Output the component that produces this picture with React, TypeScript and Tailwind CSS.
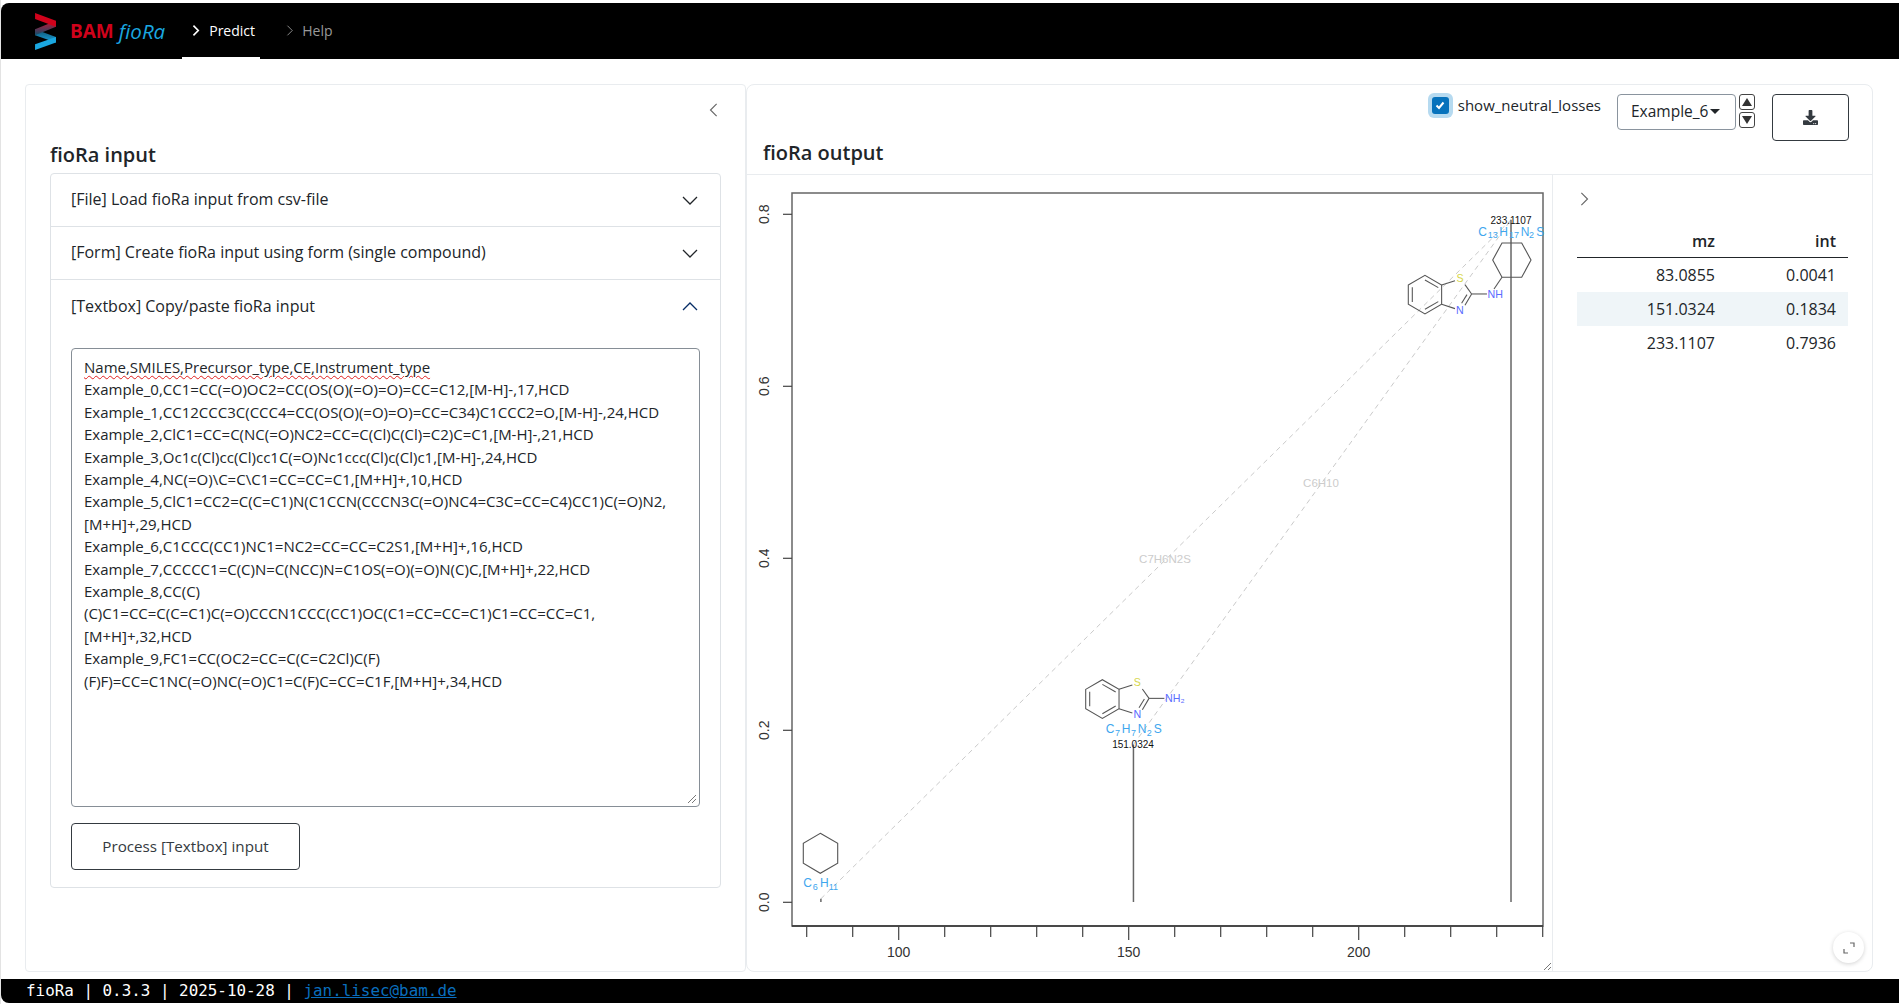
import { FaDownload } from 'react-icons/fa';

const TEXT_LINES = [
  'Example_0,CC1=CC(=O)OC2=CC(OS(O)(=O)=O)=CC=C12,[M-H]-,17,HCD',
  'Example_1,CC12CCC3C(CCC4=CC(OS(O)(=O)=O)=CC=C34)C1CCC2=O,[M-H]-,24,HCD',
  'Example_2,ClC1=CC=C(NC(=O)NC2=CC=C(Cl)C(Cl)=C2)C=C1,[M-H]-,21,HCD',
  'Example_3,Oc1c(Cl)cc(Cl)cc1C(=O)Nc1ccc(Cl)c(Cl)c1,[M-H]-,24,HCD',
  'Example_4,NC(=O)\\C=C\\C1=CC=CC=C1,[M+H]+,10,HCD',
  'Example_5,ClC1=CC2=C(C=C1)N(C1CCN(CCCN3C(=O)NC4=C3C=CC=C4)CC1)C(=O)N2,[M+H]+,29,HCD',
  'Example_6,C1CCC(CC1)NC1=NC2=CC=CC=C2S1,[M+H]+,16,HCD',
  'Example_7,CCCCC1=C(C)N=C(NCC)N=C1OS(=O)(=O)N(C)C,[M+H]+,22,HCD',
  'Example_8,CC(C)(C)C1=CC=C(C=C1)C(=O)CCCN1CCC(CC1)OC(C1=CC=CC=C1)C1=CC=CC=C1,[M+H]+,32,HCD',
  'Example_9,FC1=CC(OC2=CC=C(C=C2Cl)C(F)(F)F)=CC=C1NC(=O)NC(=O)C1=C(F)C=CC=C1F,[M+H]+,34,HCD',
];

const PEAKS = [
  { mz: '83.0855', int: '0.0041' },
  { mz: '151.0324', int: '0.1834' },
  { mz: '233.1107', int: '0.7936' },
];

const X_TICKS = [80, 90, 100, 110, 120, 130, 140, 150, 160, 170, 180, 190, 200, 210, 220, 230, 240];
const Y_TICKS = [0, 0.2, 0.4, 0.6, 0.8];

const xPos = (mz: number) => 806.7 + (mz - 80) * 4.6;
const yPos = (v: number) => 902.3 - v * 860;

function Chevron({ dir, className, weight = 1.3 }: { dir: 'up' | 'down' | 'left' | 'right'; className?: string; weight?: number }) {
  const pts = {
    up: '1,11 8,4 15,11',
    down: '1,5 8,12 15,5',
    left: '11,1 4,8 11,15',
    right: '5,1 12,8 5,15',
  }[dir];
  return (
    <svg viewBox="0 0 16 16" className={className} fill="none" stroke="currentColor" strokeWidth={weight}>
      <polyline points={pts} />
    </svg>
  );
}

function Logo() {
  return (
    <svg viewBox="45 37 62 110" className="w-[21px] h-[37px] shrink-0">
      <defs>
        <linearGradient id="mid1" x1="0" y1="0" x2="0" y2="1">
          <stop offset="0" stopColor="#c8102e" />
          <stop offset="1" stopColor="#0f4f6c" />
        </linearGradient>
        <linearGradient id="mid2" x1="0" y1="0" x2="0" y2="1">
          <stop offset="0" stopColor="#0f4f6c" />
          <stop offset="1" stopColor="#1aa3dc" />
        </linearGradient>
      </defs>
      <path d="M45 85 L107 108 L107 125 L45 103 Z" fill="url(#mid2)" />
      <path d="M107 60 L107 78 L45 103 L45 85 Z" fill="url(#mid1)" />
      <path d="M45 37 L107 60 L107 78 L45 55 Z" fill="#d0021b" />
      <path d="M107 108 L107 125 L45 147 L45 130 Z" fill="#1aa7e0" />
    </svg>
  );
}

function AccordionHead({ title, open }: { title: string; open?: boolean }) {
  return (
    <div className={`h-[53px] flex items-center justify-between pl-5 pr-[22px] ${open ? '' : 'border-b border-[#dee2e6]'}`}>
      <span className="text-[16px] text-[#212529] pb-0.5">{title}</span>
      <Chevron dir={open ? 'up' : 'down'} className={`w-4 h-4 ${open ? 'text-[#052c65]' : 'text-[#212529]'}`} />
    </div>
  );
}

function Formula({ parts, baseline }: { parts: [string, number, boolean][]; baseline: number }) {
  return (
    <g fill="#3ea6ee" fontFamily='"Liberation Sans", sans-serif'>
      {parts.map(([t, x, sub]) => (
        <text key={t + x} x={x} y={sub ? baseline + 2.7 : baseline} fontSize={sub ? 9 : 12}>
          {t}
        </text>
      ))}
    </g>
  );
}

function Thiazole({ amine }: { amine: string }) {
  // coordinates are 3x of the local crop, scaled down by the parent group
  return (
    <g fill="none" stroke="#555" strokeWidth="3.2">
      <polygon points="0,29 50,0 100,29 100,87 50,116 0,87" />
      <line x1="12" y1="36" x2="12" y2="80" />
      <line x1="50" y1="14" x2="90" y2="37" />
      <line x1="50" y1="102" x2="90" y2="79" />
      <line x1="100" y1="29" x2="140" y2="16" />
      <line x1="170" y1="28" x2="190" y2="56" />
      <line x1="190" y1="56" x2="170" y2="90" />
      <line x1="176" y1="58" x2="160" y2="84" />
      <line x1="100" y1="87" x2="140" y2="100" />
      <line x1="190" y1="56" x2="236" y2="56" />
      <g stroke="none" fontFamily='"Liberation Sans", sans-serif' fontSize="32">
        <text x="155" y="20" fill="#d6d64a" textAnchor="middle">S</text>
        <text x="155" y="115" fill="#5a6cff" textAnchor="middle">N</text>
        <text x="238" y="68" fill="#5a6cff">{amine}</text>
      </g>
    </g>
  );
}

function SpectrumPlot() {
  return (
    <svg viewBox="747 175 805 797" className="w-[805px] h-[797px] block">
      {/* neutral loss connectors */}
      <g stroke="#cacaca" strokeWidth="1" strokeDasharray="5 4">
        <line x1={xPos(83.0855)} y1={yPos(0.0041)} x2={xPos(233.1107)} y2={yPos(0.7936)} />
        <line x1={xPos(151.0324)} y1={yPos(0.1834)} x2={xPos(233.1107)} y2={yPos(0.7936)} />
      </g>
      <g fill="#cccccc" fontSize="11.5" textAnchor="middle" fontFamily='"Liberation Sans", sans-serif'>
        <text x="1165" y="563">C7H6N2S</text>
        <text x="1321" y="487">C6H10</text>
      </g>

      {/* frame and axes */}
      <rect x="792" y="193" width="751" height="733" fill="none" stroke="#666" strokeWidth="1.5" />
      <line x1="792" y1="926" x2="1543" y2="926" stroke="#333" strokeWidth="1.5" />
      {X_TICKS.map((t) => (
        <line key={t} x1={xPos(t)} y1="926" x2={xPos(t)} y2={t % 50 === 0 ? 940 : 937} stroke="#444" strokeWidth="1.2" />
      ))}
      {[100, 150, 200].map((t) => (
        <text key={t} x={xPos(t)} y="957" textAnchor="middle" fontSize="14" fill="#333" fontFamily='"Liberation Sans", sans-serif'>
          {t}
        </text>
      ))}
      {Y_TICKS.map((t) => (
        <g key={t}>
          <line x1="783" y1={yPos(t)} x2="792" y2={yPos(t)} stroke="#444" strokeWidth="1.2" />
          <text
            transform={`translate(769 ${yPos(t)}) rotate(-90)`}
            textAnchor="middle"
            fontSize="14"
            fill="#333"
            fontFamily='"Liberation Sans", sans-serif'
          >
            {t.toFixed(1)}
          </text>
        </g>
      ))}

      {/* peaks */}
      <g stroke="#666" strokeWidth="1.5">
        <line x1={xPos(83.0855)} y1="902" x2={xPos(83.0855)} y2={yPos(0.0041)} />
        <line x1={xPos(151.0324)} y1="902" x2={xPos(151.0324)} y2={yPos(0.1834)} />
        <line x1={xPos(233.1107)} y1="902" x2={xPos(233.1107)} y2={yPos(0.7936)} />
      </g>

      {/* 233 annotation */}
      <text x="1511" y="224" textAnchor="middle" fontSize="10" fill="#111" fontFamily='"Liberation Sans", sans-serif'>233.1107</text>
      <Formula
        baseline={235.7}
        parts={[['C', 1478.3, false], ['13', 1487.7, true], ['H', 1499.3, false], ['17', 1509, true], ['N', 1520.7, false], ['2', 1529, true], ['S', 1536.3, false]]}
      />
      <polygon points="1502,277.3 1521.7,277.3 1531,260 1521.7,243 1502,243 1492.7,260" fill="none" stroke="#555" strokeWidth="1.1" />
      <line x1="1502" y1="277.3" x2="1494" y2="289" stroke="#555" strokeWidth="1.1" />
      <g transform="translate(1408.3 275.3) scale(0.3333)">
        <Thiazole amine="NH" />
      </g>

      {/* 151 annotation */}
      <g transform="translate(1085.7 679.7) scale(0.3333)">
        <Thiazole amine="NH₂" />
      </g>
      <Formula
        baseline={733.3}
        parts={[['C', 1105.7, false], ['7', 1115, true], ['H', 1121.7, false], ['7', 1131, true], ['N', 1137.7, false], ['2', 1146.7, true], ['S', 1153.7, false]]}
      />
      <text x="1133" y="748" textAnchor="middle" fontSize="10" fill="#111" fontFamily='"Liberation Sans", sans-serif'>151.0324</text>

      {/* 83 annotation */}
      <polygon points="820.3,833.3 837.7,843.3 837.7,863.3 820.3,873.3 803.3,863.3 803.3,843.3" fill="none" stroke="#555" strokeWidth="1.1" />
      <Formula baseline={887.3} parts={[['C', 803.3, false], ['6', 812.7, true], ['H', 820, false], ['11', 828.7, true]]} />

      {/* resize grip */}
      <g stroke="#555" strokeWidth="0.8">
        <line x1="1544" y1="970" x2="1551" y2="963" />
        <line x1="1548" y1="970" x2="1551" y2="967" />
      </g>
    </svg>
  );
}

export default function App() {
  return (
    <div className="h-[1004px] flex flex-col bg-white pt-[3px] pb-px border-l border-[#e3e3e3] overflow-hidden font-['Open_Sans',sans-serif] text-[#212529]">
      {/* top bar */}
      <header className="h-14 shrink-0 bg-black rounded-tl-lg flex items-stretch pl-[34px]">
        <div className="flex items-center">
          <Logo />
          <span className="ml-[14px] text-[19px] font-bold text-[#d0021b]">BAM</span>
          <span className="ml-[5px] text-[20.5px] italic text-[#1aa7e0]">fioRa</span>
        </div>
        <nav className="flex ml-[17px] text-[14px]">
          <div className="w-[78px] flex items-center pl-[8px] gap-[8px] border-b-2 border-white text-white font-medium">
            <Chevron dir="right" className="w-[11px] h-[11px]" weight={2.4} />
            Predict
          </div>
          <div className="ml-6 flex items-center gap-[7px] text-[#999] pb-0.5">
            <Chevron dir="right" className="w-[11px] h-[11px]" />
            Help
          </div>
        </nav>
      </header>

      <main className="flex-1 min-h-0 flex pt-[25px] pb-[7px] pl-6 pr-[26px]">
        {/* input panel */}
        <section className="w-[721px] shrink-0 border border-[#e9ecef] rounded flex flex-col px-6">
          <div className="h-[50px] flex items-center justify-end">
            <Chevron dir="left" className="w-[14px] h-[14px] text-[#666]" />
          </div>
          <h2 className="h-[38px] flex items-center pt-0.5 text-[20px] font-semibold">fioRa input</h2>
          <div className="border border-[#dee2e6] rounded h-[715px] flex flex-col">
            <AccordionHead title="[File] Load fioRa input from csv-file" />
            <AccordionHead title="[Form] Create fioRa input using form (single compound)" />
            <AccordionHead title="[Textbox] Copy/paste fioRa input" open />
            <div className="px-5 pt-[15px]">
              <div className="relative h-[459px] border border-[#868e96] rounded pl-[12px] pr-[12px] pt-[7px] text-[15px] leading-[22.4px] text-[#212529] break-words">
                <div className="underline decoration-wavy decoration-[#e02020] decoration-1 underline-offset-2">
                  Name,SMILES,Precursor_type,CE,Instrument_type
                </div>
                {TEXT_LINES.map((line) => (
                  <div key={line}>{line}</div>
                ))}
                <svg viewBox="0 0 10 10" className="absolute right-0.5 bottom-0.5 w-2.5 h-2.5" stroke="#555" strokeWidth="0.8">
                  <line x1="1" y1="9" x2="9" y2="1" />
                  <line x1="5" y1="9" x2="9" y2="5" />
                </svg>
              </div>
              <button className="mt-4 w-[229px] h-[47px] border border-[#343a40] rounded text-[15.2px] text-[#343a40]">
                Process [Textbox] input
              </button>
            </div>
          </div>
        </section>

        {/* output panel */}
        <section className="flex-1 min-w-0 border border-[#e9ecef] rounded-lg flex flex-col">
          <div className="h-[90px] shrink-0 border-b border-[#e9ecef] flex flex-col">
            <div className="flex justify-end pt-[9px] pr-[23px] h-[56px]">
              <div className="flex items-center h-[22px]">
                <span className="w-[25px] h-[25px] rounded-md bg-[#b6daf0] flex items-center justify-center">
                  <span className="w-[17px] h-[17px] rounded-[3px] bg-[#0672bc] flex items-center justify-center">
                    <svg viewBox="0 0 12 12" className="w-3 h-3" fill="none" stroke="white" strokeWidth="2">
                      <polyline points="2.5,6.5 5,9 9.5,3.5" />
                    </svg>
                  </span>
                </span>
                <span className="ml-[5px] text-[15px]">show_neutral_losses</span>
              </div>
              <div className="ml-4 w-[119px] h-9 border border-[#8a949e] rounded flex items-center pl-[13px] pb-px text-[15.5px]">
                Example_6
                <span className="ml-[2px] w-0 h-0 border-x-[5px] border-x-transparent border-t-[5px] border-t-[#212529]" />
              </div>
              <div className="ml-[3px] flex flex-col gap-[2px]">
                <div className="w-4 h-4 border border-[#444] rounded-[3px] flex items-center justify-center">
                  <span className="w-0 h-0 border-x-[5px] border-x-transparent border-b-[8px] border-b-[#333]" />
                </div>
                <div className="w-4 h-4 border border-[#444] rounded-[3px] flex items-center justify-center">
                  <span className="w-0 h-0 border-x-[5px] border-x-transparent border-t-[8px] border-t-[#333]" />
                </div>
              </div>
              <button className="ml-[17px] w-[77px] h-[47px] border border-[#343a40] rounded flex items-center justify-center">
                <FaDownload className="w-[15px] h-[15px] text-[#343a40]" />
              </button>
            </div>
            <h2 className="pl-[16px] text-[20px] font-semibold leading-6">fioRa output</h2>
          </div>

          <div className="flex-1 min-h-0 flex">
            <div className="w-[806px] shrink-0 border-r border-[#e9ecef]">
              <SpectrumPlot />
            </div>
            <div className="relative flex-1 min-w-0 pl-6 pr-[24px] pt-[17px]">
              <Chevron dir="right" className="w-[14px] h-[14px] text-[#666]" />
              <table className="mt-[13px] w-[271px] text-[16px] text-right border-separate border-spacing-0">
                <thead>
                  <tr>
                    <th className="h-[39px] w-[148px] pr-2.5 pt-[5px] font-semibold border-b border-[#212529]">mz</th>
                    <th className="h-[39px] pr-3 pt-[5px] font-semibold border-b border-[#212529]">int</th>
                  </tr>
                </thead>
                <tbody>
                  {PEAKS.map((p, i) => (
                    <tr key={p.mz} className={`h-[34px] ${i === 1 ? 'bg-[#eff5f8]' : ''}`}>
                      <td className="pr-2.5">{p.mz}</td>
                      <td className="pr-3">{p.int}</td>
                    </tr>
                  ))}
                </tbody>
              </table>
              <div className="absolute right-[8px] bottom-[8px] w-[31px] h-[31px] rounded-full bg-white shadow-[0_1px_4px_rgba(0,0,0,0.18)] flex items-center justify-center">
                <svg viewBox="0 0 12 12" className="w-3 h-3" fill="none" stroke="#666" strokeWidth="1.2">
                  <polyline points="7,1 11,1 11,5" />
                  <polyline points="1,7 1,11 5,11" />
                </svg>
              </div>
            </div>
          </div>
        </section>
      </main>

      <footer className="h-6 shrink-0 bg-black rounded-bl-lg pl-[25px] flex items-center font-['DejaVu_Sans_Mono',monospace] text-[15.9px] text-white">
        <span className="whitespace-pre">fioRa | 0.3.3 | 2025-10-28 | </span>
        <a className="text-[#0a6ebd] underline">jan.lisec@bam.de</a>
      </footer>
    </div>
  );
}
